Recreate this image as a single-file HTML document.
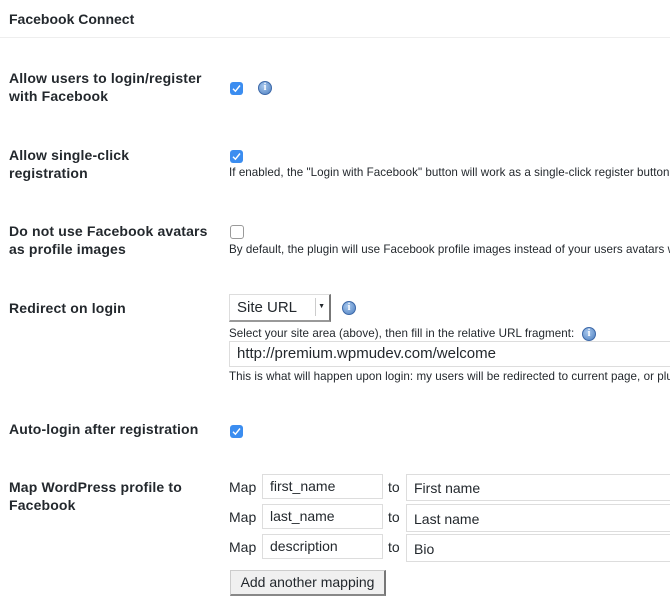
<!DOCTYPE html>
<html><head><meta charset="utf-8"><style>
html,body{margin:0;padding:0;width:670px;height:598px;overflow:hidden;background:#fff;font-family:"Liberation Sans",sans-serif;color:#23282d;}
.a{position:absolute;white-space:nowrap;}
.lbl{font-weight:bold;font-size:14px;line-height:18px;left:9px;letter-spacing:0.15px;}
.d{font-size:11.6px;left:229px;color:#23282d;letter-spacing:0.05px;}
.cb{position:absolute;width:13px;height:13px;border-radius:3px;background:#3b8df0;}
.cb svg{position:absolute;left:2px;top:2px;}
.cbe{position:absolute;width:12px;height:12px;border-radius:3px;border:1px solid #9a9a9a;background:#fff;}
.info{position:absolute;width:14px;height:14px;border-radius:50%;background:radial-gradient(circle at 40% 35%,#a8c8ee,#4d7fc0);border:1px solid #3c68a8;box-sizing:border-box;color:#fff;font:bold 10px/12px "Liberation Serif",serif;text-align:center;}
.in{position:absolute;box-sizing:border-box;border:1px solid #ddd;background:#fff;font-size:14px;padding-left:7px;line-height:23px;height:25px;}
</style></head><body>
<div class="a" style="left:9px;top:11px;font-size:14px;font-weight:bold;">Facebook Connect</div>
<div class="a" style="left:0;top:37px;width:670px;height:1px;background:#eee;"></div>

<div class="a lbl" style="top:69px;">Allow users to login/register<br>with Facebook</div>
<div class="cb" style="left:230px;top:82px;"><svg width="9" height="9" viewBox="0 0 9 9"><path d="M1 4.8L3.4 7.2L8 1.5" stroke="#fff" stroke-width="1.4" fill="none"/></svg></div>
<div class="info" style="left:258px;top:81px;">i</div>

<div class="a lbl" style="top:146px;">Allow single-click<br>registration</div>
<div class="cb" style="left:230px;top:150px;"><svg width="9" height="9" viewBox="0 0 9 9"><path d="M1 4.8L3.4 7.2L8 1.5" stroke="#fff" stroke-width="1.4" fill="none"/></svg></div>
<div class="a d" style="top:166px;">If enabled, the "Login with Facebook" button will work as a single-click register button</div>

<div class="a lbl" style="top:222px;">Do not use Facebook avatars<br>as profile images</div>
<div class="cbe" style="left:230px;top:225px;"></div>
<div class="a d" style="top:243px;">By default, the plugin will use Facebook profile images instead of your users avatars w</div>

<div class="a lbl" style="top:299px;">Redirect on login</div>
<div class="a" style="left:229px;top:294px;width:102px;height:28px;box-sizing:border-box;border:1px solid #ddd;border-right:2px solid #777;border-bottom:2px solid #999;font-size:15px;line-height:25px;padding-left:7px;">Site URL<span style="position:absolute;right:4px;top:3px;width:9px;height:18px;border-left:1px solid #ccc;font-size:7px;line-height:18px;text-align:right;">&#9660;</span></div>
<div class="info" style="left:342px;top:301px;">i</div>
<div class="a d" style="top:327px;">Select your site area (above), then fill in the relative URL fragment:</div>
<div class="info" style="left:582px;top:327px;">i</div>
<div class="in" style="left:229px;top:341px;width:460px;height:26px;font-size:15px;">http://premium.wpmudev.com/welcome</div>
<div class="a d" style="top:370px;">This is what will happen upon login: my users will be redirected to current page, or plu</div>

<div class="a lbl" style="top:420px;">Auto-login after registration</div>
<div class="cb" style="left:230px;top:425px;"><svg width="9" height="9" viewBox="0 0 9 9"><path d="M1 4.8L3.4 7.2L8 1.5" stroke="#fff" stroke-width="1.4" fill="none"/></svg></div>

<div class="a lbl" style="top:478px;">Map WordPress profile to<br>Facebook</div>

<div class="a" style="left:229px;top:479px;font-size:14px;">Map</div>
<div class="in" style="left:262px;top:474px;width:121px;">first_name</div>
<div class="a" style="left:388px;top:479px;font-size:14px;">to</div>
<div class="in" style="left:406px;top:474px;width:280px;height:27px;line-height:26px;">First name</div>

<div class="a" style="left:229px;top:509px;font-size:14px;">Map</div>
<div class="in" style="left:262px;top:504px;width:121px;">last_name</div>
<div class="a" style="left:388px;top:509px;font-size:14px;">to</div>
<div class="in" style="left:406px;top:504px;width:280px;height:28px;line-height:28px;">Last name</div>

<div class="a" style="left:229px;top:539px;font-size:14px;">Map</div>
<div class="in" style="left:262px;top:534px;width:121px;">description</div>
<div class="a" style="left:388px;top:539px;font-size:14px;">to</div>
<div class="in" style="left:406px;top:534px;width:280px;height:28px;line-height:28px;">Bio</div>

<div class="a" style="left:230px;top:570px;width:156px;height:26px;box-sizing:border-box;background:#f0f0f0;border:1px solid #ccc;border-right:2px solid #777;border-bottom:2px solid #888;font-size:14px;line-height:22px;text-align:center;">Add another mapping</div>
</body></html>
